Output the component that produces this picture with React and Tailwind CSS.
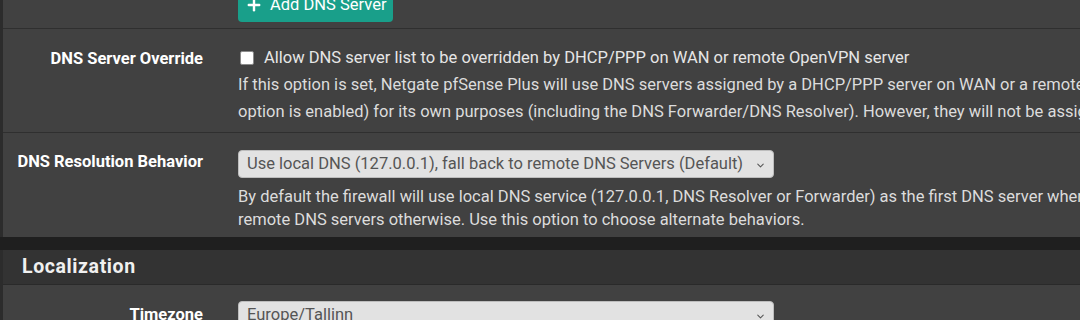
import { ChevronDown, Plus } from "lucide-react";

const font = { fontFamily: "Roboto, 'Liberation Sans', sans-serif" };

const Select = ({ value }) => (
  <div className="relative flex h-[28px] w-[536px] items-center rounded-[4px] border border-[#bdbdbd] bg-[#e2e2e2] pl-[8px] text-[16.5px] text-[#555]">
    <span className="truncate">{value}</span>
    <ChevronDown className="absolute right-[7px] top-[9px] h-[11px] w-[11px] text-[#555]" strokeWidth={2.2} />
  </div>
);

const Row = ({ label, labelPad, children, className }) => (
  <div className={"flex border-b border-[#2f2f2f] " + (className || "")}>
    <div
      className={"w-[200px] shrink-0 text-right text-[16.5px] font-bold leading-[20px] text-white " + (labelPad || "")}
    >
      {label}
    </div>
    <div className="ml-[35px] min-w-0 flex-1 overflow-hidden whitespace-nowrap">{children}</div>
  </div>
);

export default function App() {
  return (
    <div className="h-[320px] w-[1080px] overflow-hidden bg-[#1f1f1f]" style={font}>
      {/* DNS panel (continued from above) */}
      <div className="border-l-[3px] border-[#2c2c2c] bg-[#414141]">
        <div className="flex h-[29px] items-end border-b border-[#2f2f2f] pb-[6px] pl-[235px]">
          <button className="flex h-[34px] items-center gap-[7px] rounded-[4px] bg-[#199f8a] px-[7px] text-[16.5px] text-white">
            <Plus className="h-[18px] w-[18px]" strokeWidth={3.2} />
            Add DNS Server
          </button>
        </div>

        <Row label="DNS Server Override" labelPad="pt-[20px]" className="h-[104px]">
          <div className="box-content flex h-[20px] items-center gap-[10px] pt-[19px]">
            <span className="ml-[2px] h-[14px] w-[14px] rounded-[2px] border border-[#8a8a8a] bg-white" />
            <span className="text-[16.5px] text-[#e6e6e6]">
              Allow DNS server list to be overridden by DHCP/PPP on WAN or remote OpenVPN server
            </span>
          </div>
          <div className="mt-[3px] text-[16.5px] leading-[27px] text-[#dcdcdc]">
            <div>
              If this option is set, Netgate pfSense Plus will use DNS servers assigned by a DHCP/PPP server on WAN or a remote OpenVPN server (if Allow DNS server list
            </div>
            <div>
              option is enabled) for its own purposes (including the DNS Forwarder/DNS Resolver). However, they will not be assigned to DHCP clients.
            </div>
          </div>
        </Row>

        <Row label="DNS Resolution Behavior" labelPad="pt-[19px]" className="h-[104px] border-b-0">
          <div className="pt-[17px]">
            <Select value="Use local DNS (127.0.0.1), fall back to remote DNS Servers (Default)" />
          </div>
          <div className="mt-[7px] text-[16.5px] leading-[23px] text-[#dcdcdc]">
            <div>
              By default the firewall will use local DNS service (127.0.0.1, DNS Resolver or Forwarder) as the first DNS server when possible, and it will fall back to
            </div>
            <div>remote DNS servers otherwise. Use this option to choose alternate behaviors.</div>
          </div>
        </Row>
      </div>

      {/* Localization panel */}
      <div className="mt-[13px] border-l-[3px] border-[#2c2c2c] bg-[#414141]">
        <div className="flex h-[35px] items-center border-b border-[#2a2a2a] bg-[#333333] pl-[19px]">
          <h2 className="text-[19.5px] font-bold tracking-[0.6px] text-[#f0f0f0]">Localization</h2>
        </div>
        <Row label="Timezone" labelPad="pt-[20px]" className="h-[80px] border-b-0">
          <div className="pt-[16px]">
            <Select value="Europe/Tallinn" />
          </div>
        </Row>
      </div>
    </div>
  );
}
